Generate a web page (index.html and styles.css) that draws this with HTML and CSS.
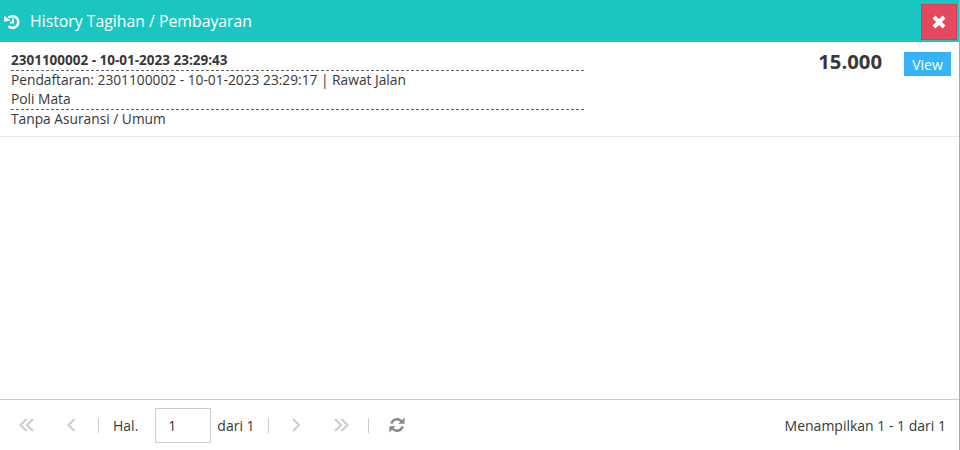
FILE: index.html
```html
<!DOCTYPE html>
<html lang="en">
<head>
  <meta charset="UTF-8" />
  <title>History Tagihan / Pembayaran</title>
  <link rel="stylesheet" href="styles.css">
</head>
<body>

<div class="window">
  <div class="header">
    <div class="title">
      <svg class="title-icon" width="16" height="16" viewBox="0 0 16 16">
        <path d="M4.4 4.9A5.8 5.8 0 1 1 4.4 13.1" fill="none" stroke="#fff" stroke-width="2.6"/>
        <path d="M0 2.8L6.6 7.8L0 8.6Z" fill="#fff"/>
        <path d="M9 5.6V9.6H6" fill="none" stroke="#fff" stroke-width="1.8"/>
      </svg>
      <span>History Tagihan / Pembayaran</span>
    </div>
    <button class="close-btn">
      <svg width="14" height="14" viewBox="0 0 14 14">
        <path d="M2 2L12 12M12 2L2 12" stroke="#fff" stroke-width="4"/>
      </svg>
    </button>
  </div>

  <div class="list">
    <div class="row">
      <div class="info">
        <div class="line strong dashed">2301100002 - 10-01-2023 23:29:43</div>
        <div class="line">Pendaftaran: 2301100002 - 10-01-2023 23:29:17 | Rawat Jalan</div>
        <div class="line dashed">Poli Mata</div>
        <div class="line">Tanpa Asuransi / Umum</div>
      </div>
      <div class="amount">15.000</div>
      <button class="view-btn">View</button>
    </div>
  </div>

  <div class="footer">
    <div class="pager">
      <svg class="pg-icon first" width="16" height="16" viewBox="0 0 16 16">
        <path d="M7.5 2L1.5 8L7.5 14M14 2L8 8L14 14" fill="none" stroke="#ccc" stroke-width="2"/>
      </svg>
      <svg class="pg-icon prev" width="10" height="16" viewBox="0 0 10 16">
        <path d="M8.5 2L2.5 8L8.5 14" fill="none" stroke="#ccc" stroke-width="2"/>
      </svg>
      <span class="sep"></span>
      <span class="label">Hal.</span>
      <input class="page-input" type="text" value="1" />
      <span class="label total">dari 1</span>
      <span class="sep"></span>
      <svg class="pg-icon next" width="10" height="16" viewBox="0 0 10 16">
        <path d="M2 2L8 8L2 14" fill="none" stroke="#ccc" stroke-width="2"/>
      </svg>
      <svg class="pg-icon last" width="16" height="16" viewBox="0 0 16 16">
        <path d="M2 2L8 8L2 14M8.5 2L14.5 8L8.5 14" fill="none" stroke="#ccc" stroke-width="2"/>
      </svg>
      <span class="sep"></span>
      <svg class="pg-icon refresh" width="16" height="16" viewBox="0 0 16 16">
        <path d="M2.4 6.6A5.8 5.8 0 0 1 12.4 4.2M13.6 9.4A5.8 5.8 0 0 1 3.6 11.8" fill="none" stroke="#888" stroke-width="2.4"/>
        <path d="M15.6 0.6V6.8H9.4ZM0.4 15.4V9.2H6.6Z" fill="#888"/>
      </svg>
    </div>
    <div class="summary">Menampilkan 1 - 1 dari 1</div>
  </div>
</div>

</body>
</html>
```

FILE: styles.css
```css
body {
  margin: 0;
  font-family: "Open Sans", Arial, sans-serif;
  font-size: 14px;
  color: #383838;
  background: white;
}
.window {
  width: 960px;
  height: 450px;
  box-sizing: border-box;
  border-right: 1px solid #aaa;
  display: flex;
  flex-direction: column;
  overflow: hidden;
}
.header {
  height: 42px;
  flex: none;
  background: #1ac7c0;
  display: flex;
  justify-content: space-between;
  align-items: center;
  padding: 0 2px 0 4px;
}
.title {
  display: flex;
  align-items: center;
  color: white;
  font-size: 15.8px;
}
.title-icon {
  margin-right: 10px;
}
.close-btn {
  width: 36px;
  height: 36px;
  padding: 0;
  align-self: flex-end;
  margin-bottom: 2px;
  background: #e4485f;
  border: 1px solid #d63d55;
  display: flex;
  align-items: center;
  justify-content: center;
}
.list {
  flex: 1;
}
.row {
  height: 95px;
  box-sizing: border-box;
  border-bottom: 1px solid #e8e8e8;
  padding: 9px 8px 0 11px;
  display: flex;
  align-items: flex-start;
}
.info {
  width: 573px;
}
.line {
  font-size: 13.75px;
  line-height: 18px;
  padding-bottom: 1px;
}
.strong {
  font-size: 13.5px;
  font-weight: bold;
}
.dashed {
  border-bottom: 1px dashed #666;
}
.amount {
  margin-left: auto;
  margin-right: 22px;
  font-size: 20.3px;
  font-weight: bold;
  line-height: 20px;
}
.view-btn {
  width: 47px;
  height: 24px;
  margin-top: 1px;
  padding: 0;
  background: #36b4f8;
  border: none;
  color: white;
  font-family: inherit;
  font-size: 14px;
}
.footer {
  height: 50px;
  flex: none;
  border-top: 1px solid #ccc;
  display: flex;
  justify-content: space-between;
  align-items: center;
  padding: 0 13px 0 19px;
}
.pager {
  display: flex;
  align-items: center;
}
.pg-icon {
  flex: none;
}
.prev {
  margin-left: 31px;
}
.sep {
  width: 1px;
  height: 15px;
  background: #ccc;
  margin-left: 22px;
}
.label {
  margin-left: 14px;
}
.page-input {
  width: 56px;
  height: 35px;
  box-sizing: border-box;
  margin-left: 17px;
  padding: 0 12px;
  border: 1px solid #ccc;
  font-family: inherit;
  font-size: 14px;
  color: #383838;
}
.total {
  margin-left: 6px;
}
.total + .sep {
  margin-left: 13px;
}
.next {
  margin-left: 22px;
}
.last {
  margin-left: 32px;
}
.last + .sep {
  margin-left: 19px;
}
.refresh {
  margin-left: 20px;
}
```
